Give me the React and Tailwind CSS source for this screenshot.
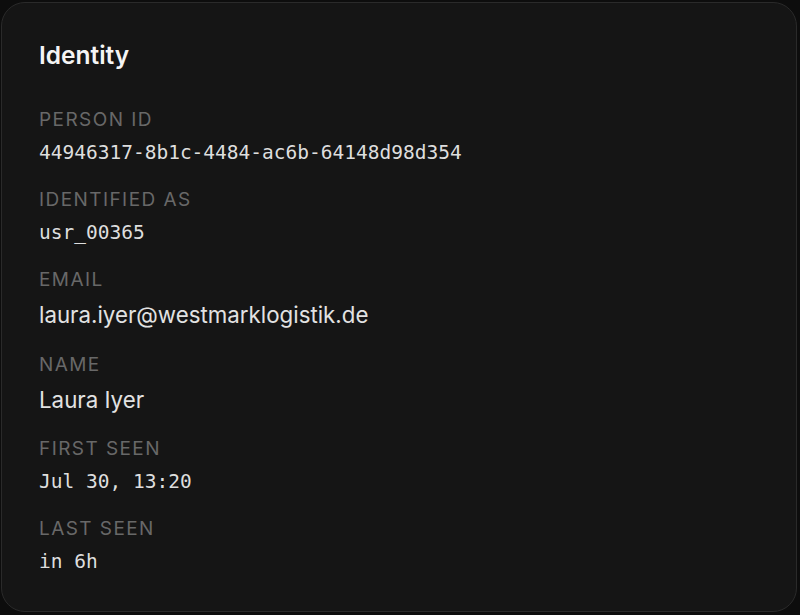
export default function App() {
  const fields = [
    { label: 'Person ID', value: '44946317-8b1c-4484-ac6b-64148d98d354', mono: true },
    { label: 'Identified as', value: 'usr_00365', mono: true },
    { label: 'Email', value: 'laura.iyer@westmarklogistik.de' },
    { label: 'Name', value: 'Laura Iyer' },
    { label: 'First seen', value: 'Jul 30, 13:20', mono: true },
    { label: 'Last seen', value: 'in 6h', mono: true },
  ];

  return (
    <div className="h-[615px] w-[800px] bg-[#0d0d0d] pt-[2px] pl-px">
      <div className="w-[796px] h-[610px] rounded-[24px] border border-[#2a2a2a] bg-[#151515] px-[37px] pt-[37px] font-['Inter',sans-serif]">
        <h2 className="text-[24.5px] leading-[30px] font-semibold text-[#f4f4f4]">Identity</h2>
        <div className="mt-[37px] flex flex-col gap-[22px]">
          {fields.map((f) => (
            <div key={f.label} className="flex flex-col gap-[8px]">
              <span className="text-[19px] leading-[26px] uppercase tracking-[0.075em] text-[#686868]">
                {f.label}
              </span>
              {f.mono ? (
                <span className="font-['DejaVu_Sans_Mono',monospace] text-[19.5px] leading-[24px] text-[#dedede]">
                  {f.value}
                </span>
              ) : (
                <span className="text-[22.3px] leading-[28.5px] text-[#e2e2e2]">{f.value}</span>
              )}
            </div>
          ))}
        </div>
      </div>
    </div>
  );
}
